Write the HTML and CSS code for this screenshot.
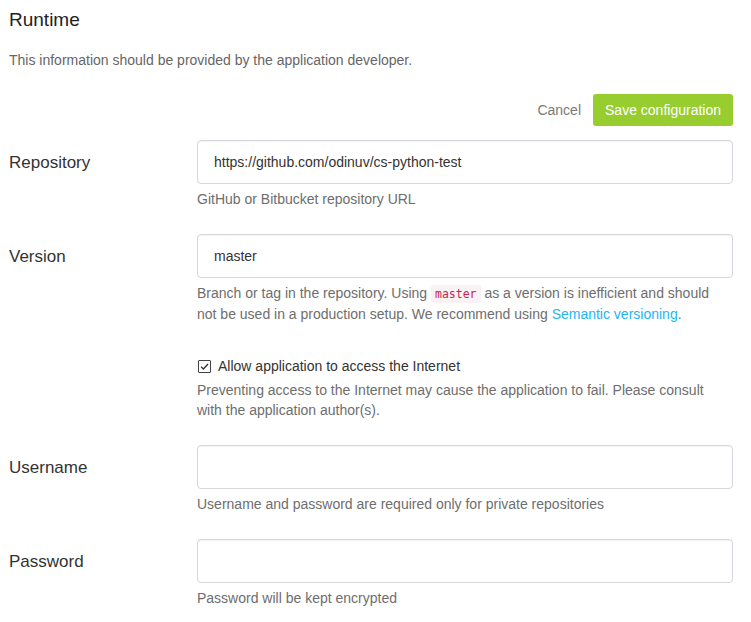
FILE: index.html
```html
<!DOCTYPE html>
<html lang="en">
<head>
<meta charset="utf-8">
<title>Runtime</title>
<link rel="stylesheet" href="styles.css">
</head>
<body>
<div class="page">
  <h2 class="title">Runtime</h2>
  <p class="desc">This information should be provided by the application developer.</p>
  <div class="actions">
    <a class="cancel" href="#">Cancel</a>
    <button class="save" type="button">Save configuration</button>
  </div>
  <form class="form">
    <div class="row">
      <label class="label">Repository</label>
      <div class="field">
        <input class="input" type="text" value="https://github.com/odinuv/cs-python-test">
        <div class="help">GitHub or Bitbucket repository URL</div>
      </div>
    </div>
    <div class="row">
      <label class="label">Version</label>
      <div class="field">
        <input class="input" type="text" value="master">
        <div class="help">Branch or tag in the repository. Using <code class="code">master</code> as a version is inefficient and should not be used in a production setup. We recommend using <a class="link" href="#">Semantic versioning</a>.</div>
      </div>
    </div>
    <div class="row row-check">
      <div class="label-spacer"></div>
      <div class="field">
        <label class="check">
          <span class="box"><svg width="11" height="11" viewBox="0 0 11 11"><path d="M2 5.6 L4.4 8 L9 3" fill="none" stroke="#333" stroke-width="1.3"/></svg></span>
          <span>Allow application to access the Internet</span>
        </label>
        <div class="help help-check">Preventing access to the Internet may cause the application to fail. Please consult with the application author(s).</div>
      </div>
    </div>
    <div class="row">
      <label class="label">Username</label>
      <div class="field">
        <input class="input" type="text" value="">
        <div class="help">Username and password are required only for private repositories</div>
      </div>
    </div>
    <div class="row">
      <label class="label">Password</label>
      <div class="field">
        <input class="input" type="password" value="">
        <div class="help">Password will be kept encrypted</div>
      </div>
    </div>
  </form>
</div>
</body>
</html>
```
FILE: styles.css
```css
html, body {
  margin: 0;
  padding: 0;
  background: #fff;
}
body {
  font-family: "Liberation Sans", Arial, sans-serif;
  color: #333;
}
.page {
  padding: 9px 18px 0 9px;
}
.title {
  margin: 0;
  font-size: 19px;
  line-height: 22px;
  font-weight: normal;
  color: #222;
}
.desc {
  margin: 19px 0 0 0;
  font-size: 14px;
  line-height: 20px;
  color: #666;
}
.actions {
  margin-top: 24px;
  display: flex;
  justify-content: flex-end;
  align-items: center;
  gap: 12px;
  height: 32px;
}
.cancel {
  font-size: 14px;
  color: #7a7a7a;
  text-decoration: none;
}
.save {
  height: 32px;
  padding: 0 12px;
  border: none;
  border-radius: 3px;
  background: #98cd2f;
  color: #fff;
  font-family: "Liberation Sans", Arial, sans-serif;
  font-size: 14px;
}
.form {
  margin-top: 14px;
}
.row {
  display: flex;
  margin-bottom: 25px;
}
.label, .label-spacer {
  width: 188px;
  flex: none;
  height: 44px;
  padding-top: 1px;
  box-sizing: border-box;
  display: flex;
  align-items: center;
  font-size: 17px;
  color: #333;
}
.label-spacer {
  height: auto;
}
.field {
  flex: 1;
  min-width: 0;
}
.input {
  display: block;
  width: 100%;
  height: 44px;
  box-sizing: border-box;
  padding: 0 16px;
  border: 1px solid #d6d6dc;
  border-radius: 4px;
  box-shadow: inset 0 1px 1px rgba(0,0,0,0.05);
  font-family: "Liberation Sans", Arial, sans-serif;
  font-size: 14px;
  color: #333;
  outline: none;
}
.help {
  margin-top: 5px;
  padding-right: 14px;
  font-size: 14px;
  line-height: 20px;
  color: #6e6e6e;
}
.code {
  font-family: "DejaVu Sans Mono", "Liberation Mono", monospace;
  font-size: 11.5px;
  color: #c7254e;
  background: #f9f2f4;
  padding: 2px 4px;
  border-radius: 3px;
}
.link {
  color: #22b6f4;
  text-decoration: none;
}
.row-check {
  padding-top: 7px;
  margin-bottom: 25px;
}
.check {
  display: flex;
  align-items: center;
  height: 20px;
  font-size: 14px;
  color: #333;
}
.box {
  width: 11px;
  height: 11px;
  border: 1px solid #444;
  border-radius: 1px;
  margin-left: 1px;
  margin-right: 7px;
  display: flex;
  align-items: center;
  justify-content: center;
}
.box svg {
  display: block;
}
.help-check {
  margin-top: 4px;
}
```
